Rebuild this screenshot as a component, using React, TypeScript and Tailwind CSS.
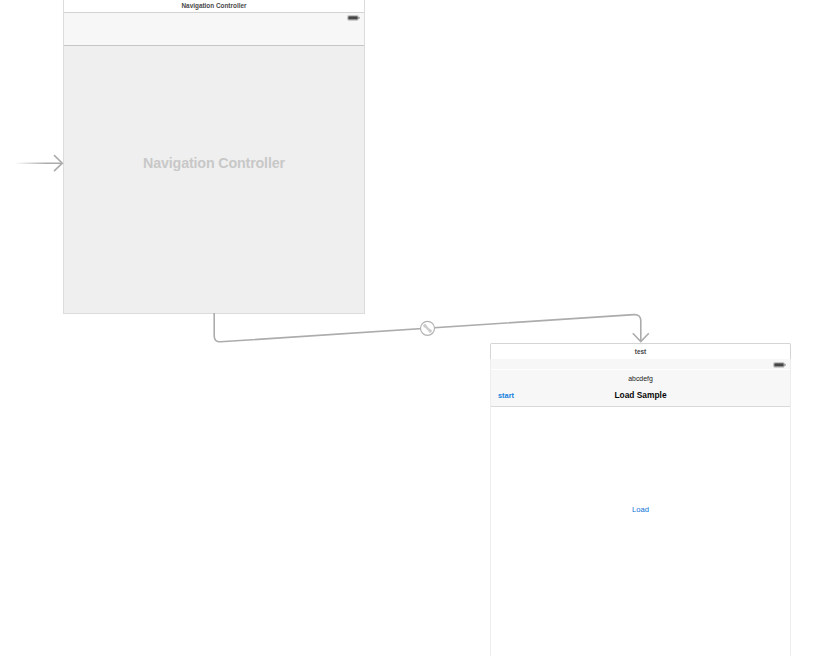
function Battery() {
  return (
    <svg width="13" height="6" viewBox="0 0 13 6" className="block">
      <rect x="0.5" y="0.5" width="10.8" height="4.8" rx="1" fill="#dedede" stroke="#c6c6c6" strokeWidth="1" />
      <rect x="1.3" y="1.3" width="9.4" height="3.2" rx="0.5" fill="#464646" />
      <rect x="11.3" y="1.8" width="1.3" height="2.2" rx="0.5" fill="#969696" />
    </svg>
  );
}

function NavigationScene() {
  return (
    <section className="absolute left-[63px] top-0 flex h-[314px] w-[302px] flex-col border-x border-b border-[#dcdcdc] bg-[#efefef]">
      <header className="flex h-[13px] items-start justify-center border-b border-[#d4d4d4] bg-white text-[6.4px] font-bold leading-[11px] text-[#484848]">
        Navigation Controller
      </header>
      <div className="flex h-[33px] items-start justify-end border-b border-[#c5c5c5] bg-[#f7f7f7] pr-[4px] pt-[2px]">
        <Battery />
      </div>
      <div className="flex justify-center pt-[109px] text-[14.3px] font-bold leading-4 tracking-[-0.17px] text-[#c8c8c8]">
        Navigation Controller
      </div>
    </section>
  );
}

function SampleScene() {
  return (
    <section className="absolute left-[490px] top-[343px] flex h-[313px] w-[301px] flex-col">
      <header className="flex h-[16px] items-center justify-center rounded-t-[2px] border border-b-0 border-[#d5d5d5] bg-white pt-[1px] text-[6.4px] font-bold leading-[10px] text-[#484848]">
        test
      </header>
      <div className="flex flex-1 flex-col border-x border-[#ededed]">
        <div className="flex h-[11px] items-start justify-end border-b border-white bg-[#f7f7f7] pr-[4px] pt-[3px]">
          <Battery />
        </div>
        <div className="flex h-[37px] flex-col border-b border-[#d9d9d9] bg-[#f7f7f7]">
          <div className="pt-[4px] text-center text-[6.9px] leading-[10px] text-[#222222]">abcdefg</div>
          <div className="grid grid-cols-[1fr_auto_1fr] items-baseline pt-[5px] leading-[12px]">
            <button className="pl-[7px] text-left text-[7.4px] font-bold text-[#157fdd]">start</button>
            <h1 className="text-[8.4px] font-bold text-[#080808]">Load Sample</h1>
          </div>
        </div>
        <div className="flex justify-center bg-white pt-[97px]">
          <button className="text-[7.6px] leading-[12px] text-[#0a72d8]">Load</button>
        </div>
      </div>
    </section>
  );
}

function Connections() {
  return (
    <svg width="813" height="663" viewBox="0 0 813 663" className="pointer-events-none absolute inset-0" fill="none">
      <defs>
        <linearGradient id="entry" gradientUnits="userSpaceOnUse" x1="15" x2="46" y1="0" y2="0">
          <stop stopColor="#acacac" stopOpacity="0" />
          <stop offset="1" stopColor="#acacac" />
        </linearGradient>
      </defs>
      <rect x="15" y="162.5" width="47" height="1.5" fill="url(#entry)" />
      <path d="M54 155.2 62.3 163.2 54 171.2" stroke="#acacac" strokeWidth="1.6" />
      <g stroke="#acacac" strokeWidth="1.6">
        <path d="M214.2 313V336Q214.2 342.1 220.5 341.8L634 314.6Q640.8 314.2 640.8 321V341" />
        <path d="M632.8 333.3 640.8 341.5 648.8 333.3" />
      </g>
      <circle cx="427.5" cy="328.3" r="7" fill="white" stroke="#b2b2b2" strokeWidth="1.2" />
      <path d="m424.3 325.1 6.5 6.5" stroke="#cccccc" strokeWidth="2.2" />
      <circle cx="424.9" cy="325.7" r="1.7" fill="#cccccc" />
      <circle cx="430.2" cy="331" r="1.7" fill="#cccccc" />
    </svg>
  );
}

export default function App() {
  return (
    <main className="relative h-[663px] w-[813px] overflow-hidden bg-white font-['Liberation_Sans',Arial,sans-serif]">
      <NavigationScene />
      <SampleScene />
      <Connections />
    </main>
  );
}
